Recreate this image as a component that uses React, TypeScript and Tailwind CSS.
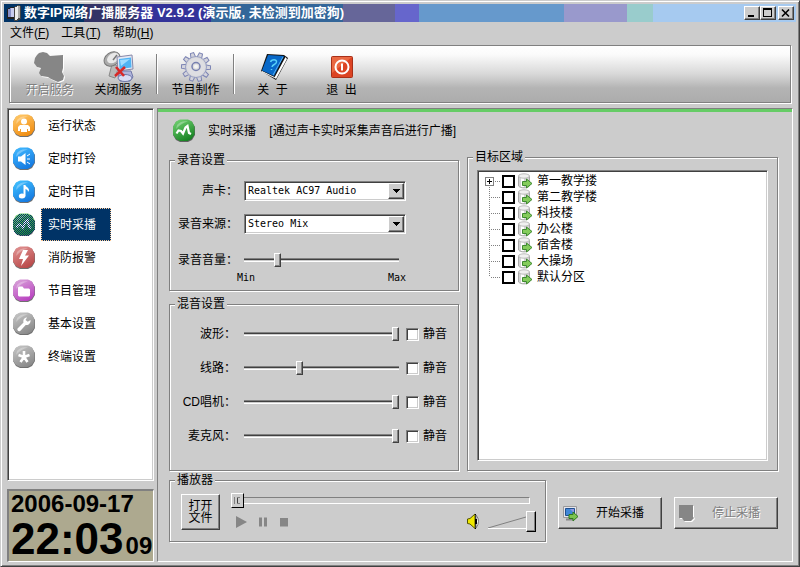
import type { ReactNode } from "react";
import { clsx } from "clsx";

const TITLE_BANDS = [
  { color: "#003366", size: 80 },
  { color: "#333366", size: 53 },
  { color: "#333399", size: 74 },
  { color: "#336699", size: 132 },
  { color: "#666699", size: 52 },
  { color: "#6666cc", size: 24 },
  { color: "#6699cc", size: 145 },
  { color: "#9999cc", size: 63 },
  { color: "#99cccc", size: 26 },
  { color: "#a6caf0", size: 143 },
];

const MENUS = [
  { label: "文件", key: "F" },
  { label: "工具", key: "T" },
  { label: "帮助", key: "H" },
];

const NAV = [
  { id: "status", label: "运行状态", light: "#ffc868", dark: "#f08c10" },
  { id: "bell", label: "定时打铃", light: "#40b8ff", dark: "#1478e0" },
  { id: "music", label: "定时节目", light: "#40c0ff", dark: "#1478e0" },
  { id: "live", label: "实时采播", light: "#7ad07a", dark: "#209030" },
  { id: "alarm", label: "消防报警", light: "#e09090", dark: "#b84848" },
  { id: "manage", label: "节目管理", light: "#d8a0d8", dark: "#b840c0" },
  { id: "basic", label: "基本设置", light: "#c4c4c4", dark: "#888888" },
  { id: "terminal", label: "终端设置", light: "#c4c4c4", dark: "#888888" },
];

const MIXERS = [
  { id: "wave", label: "波形：", value: 100 },
  { id: "line", label: "线路：", value: 35 },
  { id: "cd", label: "CD唱机：", value: 100 },
  { id: "mic", label: "麦克风：", value: 100 },
];

const ZONES = ["第一教学搂", "第二教学楼", "科技楼", "办公楼", "宿舍楼", "大操场", "默认分区"];

const RAISED =
  "border border-t-white border-l-white border-r-[#404040] border-b-[#404040] bg-[#ccc] shadow-[inset_-1px_-1px_0_#808080]";
const SUNKEN =
  "border border-t-[#808080] border-l-[#808080] border-r-white border-b-white shadow-[inset_1px_1px_0_#404040,inset_-1px_-1px_0_#ccc]";
const DISABLED_TEXT = "text-[#808080] [text-shadow:1px_1px_0_#fff]";

const SLIDER =
  "h-5 appearance-none bg-transparent [&::-webkit-slider-runnable-track]:h-1 [&::-webkit-slider-runnable-track]:bg-[linear-gradient(#808080_25%,#404040_25%_50%,#ccc_50%_75%,#fff_75%)] [&::-webkit-slider-thumb]:-mt-[5px] [&::-webkit-slider-thumb]:h-[14px] [&::-webkit-slider-thumb]:w-[7px] [&::-webkit-slider-thumb]:appearance-none [&::-webkit-slider-thumb]:border [&::-webkit-slider-thumb]:border-t-white [&::-webkit-slider-thumb]:border-l-white [&::-webkit-slider-thumb]:border-r-[#404040] [&::-webkit-slider-thumb]:border-b-[#404040] [&::-webkit-slider-thumb]:bg-[#ccc] [&::-webkit-slider-thumb]:shadow-[inset_-1px_-1px_0_#808080]";

const GLYPHS: Record<string, ReactNode> = {
  status: (
    <g fill="#fff">
      <circle cx="12" cy="7.5" r="3" />
      <path d="M6 17v-4l2-2h8l2 2v4h-2v-2h-1v3H9v-3H8v2z" />
    </g>
  ),
  bell: (
    <g fill="#fff">
      <path d="M6 9.500h3L13.500 6v12L9 14.500H6z" />
      <path d="M15 9l3-2M15 12h3M15 15l3 2" stroke="#fff" />
    </g>
  ),
  music: (
    <g fill="#fff">
      <ellipse cx="10" cy="16" rx="3.200" ry="2.500" />
      <path d="M11.500 5h2c0 2 3.500 2 3.500 5.500l-1 1.500c0-2-1-2.500-2.500-3v7.500h-2z" />
    </g>
  ),
  live: <path d="M4.500 14.500l2-3 2.500.5 2 2.500 2.500-6 2-1.500 1.500 7 2 1" fill="none" stroke="#fff" strokeWidth="2.200" />,
  alarm: <path d="M11 4h5l-3 5.500h4L9 20l2-7H7z" fill="#fff" />,
  manage: <path d="M6 8.500l1-1h3.500l1.500 2h5l1 1v6l-1 1H7l-1-1z" fill="#fff" />,
  basic: (
    <path
      d="M5.500 16.500l6-6c-.7-2.500.8-5 3.500-5l-1.500 2.500 2.300 1.800L18.500 8c.5 3-2 5.500-4.800 5l-5.500 6c-1.800.8-3.500-1-2.700-2.500z"
      fill="#fff"
    />
  ),
  terminal: <path d="M12 12V6M12 12l5.500-2M12 12l3.500 5M12 12l-3.500 5M12 12L6.500 10" stroke="#fff" strokeWidth="2.600" />,
};

type OrbProps = { id: string; glyph: string; light: string; dark: string; dithered?: boolean };

function Orb({ id, glyph, light, dark, dithered }: OrbProps) {
  return (
    <svg width="24" height="24" viewBox="0 0 24 24" className="shrink-0" aria-hidden="true">
      <defs>
        <linearGradient id={`orb-${id}`} x1="0.200" y1="0" x2="0.700" y2="1">
          <stop offset="0" stopColor={light} />
          <stop offset="1" stopColor={dark} />
        </linearGradient>
        <pattern id={`dither-${id}`} width="2" height="2" patternUnits="userSpaceOnUse">
          <rect width="1" height="1" fill="#003366" />
          <rect x="1" y="1" width="1" height="1" fill="#003366" />
        </pattern>
      </defs>
      <path d="M8 1h8l4 2 3 5v8l-3 5-4 2H8l-4-2-3-5V8l3-5z" fill="#333" opacity="0.700" />
      <path d="M8 .5h8l4 2 2.500 5v8l-3 4.500-4 2H8l-4-2L1 15.500v-8l3-5z" fill={`url(#orb-${id})`} />
      <path d="M5 6Q9 1 16 2.500 9 4 4 10z" fill="#fff" opacity="0.300" />
      {GLYPHS[glyph]}
      {dithered && (
        <path
          d="M8 1h8l4 2 3 5v8l-3 5-4 2H8l-4-2-3-5V8l3-5z"
          fill={`url(#dither-${id})`}
          shapeRendering="crispEdges"
        />
      )}
    </svg>
  );
}

function AppIcon() {
  return (
    <svg width="16" height="16" viewBox="0 0 16 16" shapeRendering="crispEdges" aria-hidden="true">
      <path d="M1 4l4-2h3v12H1z" fill="#222" />
      <path d="M2 4l3-1v9H2z" fill="#8890c8" />
      <path d="M5 3h3v9H5z" fill="#c8ccf0" />
      <path d="M8 2l4-2 3 1v13l-4 2H8z" fill="#444" />
      <path d="M9 2l3-1v13l-3 1z" fill="#eee" />
      <path d="M12 1h2v12h-2z" fill="#aaa" />
    </svg>
  );
}

function StartServiceIcon() {
  const shape = "M4 4l2-2 4-1 4 1 3 3 13-1v13l-1 4 2 4-1 4-5 2-7-3-3-2-7-1-2-3 2-5-4-1-3-4 1-5z";
  return (
    <svg width="33" height="32" viewBox="0 0 33 32" aria-hidden="true">
      <path d={shape} fill="#fff" transform="translate(1 1)" />
      <path d={shape} fill="#868686" />
    </svg>
  );
}

function StopServiceIcon() {
  return (
    <svg width="32" height="32" viewBox="0 0 32 32" aria-hidden="true">
      <path d="M9 13l-3 12 6 2 4-12z" fill="#b8b8b8" stroke="#888" />
      <ellipse cx="9" cy="8" rx="8.500" ry="6.500" transform="rotate(-35 9 8)" fill="#aaa" stroke="#777" />
      <ellipse cx="10" cy="7" rx="6.500" ry="4.500" transform="rotate(-35 10 7)" fill="#e8e8e8" />
      <path d="M10 9l4-5" stroke="#777" strokeWidth="1.500" />
      <path d="M14 6l15-2 1 14-15 2z" fill="#e4e8f4" stroke="#8888a8" />
      <path d="M16 8l12-1.500.5 10L16.500 18z" fill="#50b4f4" />
      <path d="M17 9l10-1-9 7z" fill="#a0dcff" />
      <path d="M18 20h10l2 6-3 4H17l-2-5z" fill="#b0b4dc" stroke="#7078a8" />
      <ellipse cx="22" cy="27" rx="7" ry="3.500" fill="#d8dcf4" stroke="#7078a8" />
      <path d="M13 16l8 9M22 16l-10 9" stroke="#d82828" strokeWidth="2.600" />
    </svg>
  );
}

function GearIcon() {
  const teeth = [20, 56, 92, 128, 164, 200, 236, 272, 308, 344];
  return (
    <svg width="32" height="32" viewBox="0 0 32 32" aria-hidden="true">
      {teeth.map((angle) => (
        <path
          key={angle}
          d="M13.500 7l.8-5.500h3.400l.8 5.500z"
          transform={`rotate(${angle} 16 16)`}
          fill="#d4d4dc"
          stroke="#7c84b4"
        />
      ))}
      <circle cx="16" cy="16" r="10.500" fill="#d8d8dc" stroke="#8c94bc" strokeWidth="0.800" />
      <circle cx="16" cy="16" r="9" fill="#dedee2" />
      <circle cx="16" cy="15.500" r="4" fill="#ddd" stroke="#7880b0" strokeWidth="1.500" />
      <circle cx="16" cy="15.500" r="2" fill="#f4f4f4" />
    </svg>
  );
}

function BookIcon() {
  return (
    <svg width="32" height="32" viewBox="0 0 32 32" aria-hidden="true">
      <path d="M10 3L27 4 31 7 19 29 4 20z" fill="#111" />
      <path d="M28.500 6L17.500 26.500 19 28 30 8z" fill="#fff" />
      <path d="M5 20l12.500 6 1 1.500L5 21z" fill="#fff" />
      <path d="M11 4l16 1-10 20-12-5.500z" fill="#0868c8" />
      <path d="M26 6L16 24" stroke="#58b0f0" />
      <path d="M13.500 11c1-3 6.500-3 6 0s-4 2-4.500 5M14.500 18v1" fill="none" stroke="#58d0f8" strokeWidth="1.500" />
    </svg>
  );
}

function PowerIcon() {
  return (
    <svg width="32" height="32" viewBox="0 0 32 32" aria-hidden="true">
      <rect x="5.500" y="5.500" width="21" height="21" rx="1" fill="#dc4424" stroke="#a83018" />
      <path d="M6 6h20L6 22z" fill="#f07850" opacity="0.700" />
      <circle cx="16" cy="16" r="6.500" fill="none" stroke="#fff" strokeWidth="2" />
      <path d="M16 12.500v7" stroke="#fff" strokeWidth="2" />
    </svg>
  );
}

function ZoneIcon() {
  return (
    <svg width="15" height="16" viewBox="0 0 15 16" className="shrink-0" aria-hidden="true">
      <path d="M.5 3v10c2 2.500 9 2.500 11 0V3z" fill="#d4d4d4" stroke="#aaa" />
      <path d="M3 4h3v10H3z" fill="#fff" />
      <ellipse cx="6" cy="3" rx="5.500" ry="2.200" fill="#f0f0f0" stroke="#bbb" />
      <path d="M4.500 8.500h4V6l5.500 4.500L8.500 15v-2.500h-4z" fill="#84cc5c" stroke="#3f8a30" />
    </svg>
  );
}

function StartCaptureIcon() {
  return (
    <svg width="16" height="17" viewBox="0 0 16 17" aria-hidden="true">
      <path d="M.5 1.500h13v11H.5z" fill="#e4e4ec" stroke="#999" />
      <path d="M2.500 3.500h9v7h-9z" fill="#4088d8" stroke="#205090" />
      <path d="M7 4h4v4z" fill="#9098e0" />
      <path d="M3 14.500h7" stroke="#888" strokeWidth="2" />
      <path d="M6 9.500h4V7l5 4.500-5 4.500v-2.500H6z" fill="#7cc450" stroke="#2f7a20" />
    </svg>
  );
}

function StopCaptureIcon() {
  return (
    <svg width="16" height="17" viewBox="0 0 16 17" aria-hidden="true">
      <path d="M1 1h14v11l1 2-3 3H6l-2-3H1z" fill="#fff" />
      <path d="M0 0h14v12l1 1-3 3H5l-2-3H0z" fill="#868686" />
    </svg>
  );
}

type GroupProps = { title: string; className?: string; bodyClassName?: string; children: ReactNode };

function Group({ title, className, bodyClassName, children }: GroupProps) {
  return (
    <fieldset
      className={clsx(
        "min-w-0 border border-[#808080] shadow-[1px_1px_0_#fff,inset_1px_1px_0_#fff]",
        className,
      )}
    >
      <legend className="ml-[5px] h-4 bg-[#ccc] px-0.5 leading-4">{title}</legend>
      <div className={bodyClassName}>{children}</div>
    </fieldset>
  );
}

type ToolButtonProps = { icon: ReactNode; label: string; disabled?: boolean };

function ToolButton({ icon, label, disabled }: ToolButtonProps) {
  return (
    <button type="button" disabled={disabled} className="flex w-[69px] flex-col items-center pt-[5px]">
      {icon}
      <span className={clsx("whitespace-pre leading-[14px]", disabled && DISABLED_TEXT)}>{label}</span>
    </button>
  );
}

function ToolSeparator() {
  return (
    <div className="flex w-2 justify-center py-2">
      <div className="w-0.5 border-l border-[#808080] bg-white" />
    </div>
  );
}

type SelectRowProps = { id: string; label: string; option: string };

function SelectRow({ id, label, option }: SelectRowProps) {
  return (
    <div className="flex h-5 items-center gap-1.5">
      <label htmlFor={id} className="w-[60px] text-right">
        {label}
      </label>
      <div className="relative h-5 w-[162px]">
        <select
          id={id}
          className={clsx(SUNKEN, "h-full w-full appearance-none bg-white pl-[3px] font-['DejaVu_Sans_Mono',monospace] text-[10px]")}
        >
          <option>{option}</option>
        </select>
        <span className={clsx(RAISED, "pointer-events-none absolute top-0.5 right-0.5 flex h-4 w-4 items-center justify-center")}>
          <svg width="7" height="4" viewBox="0 0 7 4" shapeRendering="crispEdges" aria-hidden="true">
            <path d="M0 0h7L3.500 4z" />
          </svg>
        </span>
      </div>
    </div>
  );
}

function TitleBar() {
  return (
    <header className="relative flex h-[18px] items-center justify-between">
      <div className="absolute inset-0 flex">
        {TITLE_BANDS.map(({ color, size }) => (
          <div key={color} style={{ backgroundColor: color, flexGrow: size }} />
        ))}
      </div>
      <div className="relative flex items-center gap-0.5 pl-0.5">
        <AppIcon />
        <h1 className="text-[13px] leading-[18px] font-bold whitespace-nowrap text-white">
          数字IP网络广播服务器 V2.9.2 (演示版, 未检测到加密狗)
        </h1>
      </div>
      <div className="relative flex pr-0.5">
        <button type="button" aria-label="最小化" className={clsx(RAISED, "h-[14px] w-4")}>
          <svg width="12" height="12" viewBox="0 0 12 12" shapeRendering="crispEdges">
            <path d="M3 8h6v2H3z" />
          </svg>
        </button>
        <button type="button" aria-label="最大化" className={clsx(RAISED, "h-[14px] w-4")}>
          <svg width="12" height="12" viewBox="0 0 12 12" shapeRendering="crispEdges">
            <path d="M2 1h9v9H2zM3 3v6h7V3z" fillRule="evenodd" />
          </svg>
        </button>
        <button type="button" aria-label="关闭" className={clsx(RAISED, "ml-0.5 h-[14px] w-4")}>
          <svg width="12" height="12" viewBox="0 0 12 12">
            <path d="M3 2.500l7 7M10 2.500l-7 7" stroke="#000" strokeWidth="1.600" />
          </svg>
        </button>
      </div>
    </header>
  );
}

function Sidebar() {
  return (
    <aside className="flex w-[147px] shrink-0 flex-col gap-2">
      <nav className={clsx(SUNKEN, "flex-1 bg-white px-1")}>
        {NAV.map(({ id, label, light, dark }) => {
          const active = id === "live";
          return (
            <a key={id} href={`#${id}`} className="flex h-[33px] items-center gap-[5px]">
              <Orb id={id} glyph={id} light={light} dark={dark} dithered={active} />
              <span
                className={clsx(
                  "flex h-full w-[70px] items-center pl-[7px]",
                  active && "bg-[#003366] text-white outline-1 -outline-offset-1 outline-dotted outline-[#ffcc99]",
                )}
              >
                {label}
              </span>
            </a>
          );
        })}
      </nav>
      <div className="border-t-2 border-l-2 border-r border-b border-t-[#808080] border-l-[#808080] border-r-white border-b-white bg-[#ada98f] pl-0.5 font-['Liberation_Sans',sans-serif] font-bold text-black">
        <div className="text-2xl leading-[25px]">2006-09-17</div>
        <div className="flex items-baseline gap-0.5 leading-[45px]">
          <span className="text-[44px]">22:03</span>
          <span className="text-2xl leading-6">09</span>
        </div>
      </div>
    </aside>
  );
}

function RecordGroup() {
  return (
    <Group title="录音设置" bodyClassName="px-2 pt-[13px] pb-1">
      <div className="flex flex-col gap-[13px]">
        <SelectRow id="card" label="声卡：" option="Realtek AC97 Audio" />
        <SelectRow id="source" label="录音来源：" option="Stereo Mix" />
      </div>
      <div className="mt-4 flex items-center gap-1.5">
        <label htmlFor="record-volume" className="w-[60px] text-right">
          录音音量：
        </label>
        <input id="record-volume" type="range" defaultValue={20} className={clsx(SLIDER, "w-[155px]")} />
      </div>
      <div className="ml-[59px] flex h-4 w-[169px] items-center justify-between font-['DejaVu_Sans_Mono',monospace] text-[10px]">
        <span>Min</span>
        <span>Max</span>
      </div>
    </Group>
  );
}

function MixGroup() {
  return (
    <Group title="混音设置" className="flex-1" bodyClassName="px-2 pt-[5px]">
      {MIXERS.map(({ id, label, value }) => (
        <div key={id} className="flex h-[34px] items-center">
          <label htmlFor={id} className="mr-2 w-[58px] text-right whitespace-nowrap">
            {label}
          </label>
          <input id={id} type="range" defaultValue={value} className={clsx(SLIDER, "mr-[7px] w-[155px]")} />
          <label className="flex items-center gap-1">
            <input type="checkbox" className={clsx(SUNKEN, "h-[13px] w-[13px] appearance-none bg-white checked:bg-[#404040]")} />
            静音
          </label>
        </div>
      ))}
    </Group>
  );
}

function ZoneGroup() {
  return (
    <Group title="目标区域" className="flex flex-1 flex-col" bodyClassName="flex flex-1 flex-col px-[9px] pt-[5px] pb-[9px]">
      <ul className={clsx(SUNKEN, "flex-1 bg-white pt-0.5 pl-[7px]")}>
        {ZONES.map((zone, i) => (
          <li key={zone} className="flex h-4 items-center">
            <svg width="17" height="16" viewBox="0 0 17 16" shapeRendering="crispEdges" aria-hidden="true">
              <path
                d={i === ZONES.length - 1 ? "M4.500 0v8" : i === 0 ? "M4.500 12v4" : "M4.500 0v16"}
                stroke="#808080"
                strokeDasharray="1 1"
              />
              <path d="M6 8.500h9" stroke="#808080" strokeDasharray="1 1" />
              {i === 0 && (
                <>
                  <rect x="0.500" y="4.500" width="8" height="8" fill="#fff" stroke="#808080" />
                  <path d="M2 8.500h5M4.500 6v5" stroke="#000" />
                </>
              )}
            </svg>
            <label className="flex items-center leading-4">
              <input
                type="checkbox"
                className="mr-[3px] h-[13px] w-[13px] appearance-none border-2 border-black bg-white checked:bg-black"
              />
              <ZoneIcon />
              <span className="pl-1">{zone}</span>
            </label>
          </li>
        ))}
      </ul>
    </Group>
  );
}

function PlayerGroup() {
  return (
    <Group title="播放器" className="flex-1" bodyClassName="pt-1 pr-[9px] pb-[9px] pl-[11px]">
      <div className="flex items-start gap-[11px]">
        <button type="button" className={clsx(RAISED, "mt-0.5 h-9 w-[39px] leading-3")}>
          打开
          <br />
          文件
        </button>
        <div className="flex min-w-0 flex-1 flex-col gap-[3px]">
          <input
            type="range"
            aria-label="播放进度"
            disabled
            defaultValue={0}
            className="mr-1.5 h-4 appearance-none bg-transparent [&::-webkit-slider-runnable-track]:h-[7px] [&::-webkit-slider-runnable-track]:border [&::-webkit-slider-runnable-track]:border-t-[#808080] [&::-webkit-slider-runnable-track]:border-l-[#808080] [&::-webkit-slider-runnable-track]:border-r-white [&::-webkit-slider-runnable-track]:border-b-white [&::-webkit-slider-thumb]:-mt-[5px] [&::-webkit-slider-thumb]:-ml-px [&::-webkit-slider-thumb]:h-[15px] [&::-webkit-slider-thumb]:w-[13px] [&::-webkit-slider-thumb]:appearance-none [&::-webkit-slider-thumb]:border [&::-webkit-slider-thumb]:border-t-white [&::-webkit-slider-thumb]:border-l-white [&::-webkit-slider-thumb]:border-r-black [&::-webkit-slider-thumb]:border-b-black [&::-webkit-slider-thumb]:bg-[#ccc] [&::-webkit-slider-thumb]:bg-[linear-gradient(#808080,#808080),linear-gradient(#404040,#404040),linear-gradient(#808080,#808080),linear-gradient(#808080,#808080)] [&::-webkit-slider-thumb]:bg-[size:1px_7px,1px_5px,3px_1px,3px_1px] [&::-webkit-slider-thumb]:bg-[position:2px_3px,5px_4px,5px_3px,5px_9px] [&::-webkit-slider-thumb]:bg-no-repeat"
          />
          <div className="flex h-[21px] items-center">
            <div className="flex flex-1 gap-2.5 pl-1">
              <button type="button" disabled aria-label="播放">
                <svg width="13" height="12" viewBox="0 0 13 12">
                  <path d="M1 0v12l11-6z" fill="#868686" />
                </svg>
              </button>
              <button type="button" disabled aria-label="暂停">
                <svg width="11" height="12" viewBox="0 0 11 12">
                  <path d="M1 1.500h3v9H1zM6 1.500h3v9H6z" fill="#868686" />
                </svg>
              </button>
              <button type="button" disabled aria-label="停止">
                <svg width="11" height="12" viewBox="0 0 11 12">
                  <path d="M1 2h8v8.500H1z" fill="#868686" />
                </svg>
              </button>
            </div>
            <svg width="13" height="17" viewBox="0 0 13 17" aria-hidden="true">
              <path d="M.5 6L3 5.500 8 1v14.500L3 11l-2.500-.5z" fill="#f0e800" stroke="#555500" />
              <path d="M8.500 1v15" stroke="#000" />
              <path d="M9 2q5 6 0 13z" fill="#fff" stroke="#777" />
              <path d="M9 6v5" stroke="#000" strokeWidth="2" />
            </svg>
            <div className="relative ml-2 h-[21px] w-12">
              <svg className="absolute inset-0" width="48" height="21" viewBox="0 0 48 21" aria-hidden="true">
                <path d="M0 17L38 6" stroke="#808080" />
                <path d="M0 17.500h38" stroke="#fff" />
              </svg>
              <input
                type="range"
                aria-label="音量"
                defaultValue={100}
                className="absolute inset-0 h-[21px] w-12 appearance-none bg-transparent [&::-webkit-slider-thumb]:h-[21px] [&::-webkit-slider-thumb]:w-2.5 [&::-webkit-slider-thumb]:appearance-none [&::-webkit-slider-thumb]:border [&::-webkit-slider-thumb]:border-t-white [&::-webkit-slider-thumb]:border-l-white [&::-webkit-slider-thumb]:border-r-black [&::-webkit-slider-thumb]:border-b-black [&::-webkit-slider-thumb]:bg-[#ccc] [&::-webkit-slider-thumb]:shadow-[inset_-1px_-1px_0_#808080]"
              />
            </div>
          </div>
        </div>
      </div>
    </Group>
  );
}

export default function App() {
  return (
    <div className="flex min-h-screen flex-col border border-t-[#ccc] border-l-[#ccc] border-r-[#404040] border-b-[#404040] bg-[#ccc] px-[3px] pt-[3px] pb-1 font-['Liberation_Sans','Noto_Sans_CJK_SC',sans-serif] text-xs text-black shadow-[inset_1px_1px_0_#fff,inset_-1px_-1px_0_#808080]">
      <TitleBar />
      <div className="flex h-[21px] items-center gap-3 pl-1.5" role="menubar">
        {MENUS.map(({ label, key }) => (
          <button key={key} type="button" role="menuitem" className="leading-5">
            {label}(<u>{key}</u>)
          </button>
        ))}
      </div>

      <div
        role="toolbar"
        className="mx-[5px] mt-0.5 flex h-[58px] border border-[#808080] bg-[linear-gradient(#fff_0%,#fbfbfb_15%,#d8d8d8_50%,#b4b4b4_75%,#acacac_100%)] pl-[5px] shadow-[1px_1px_0_#fff,inset_1px_1px_0_#fff]"
      >
        <ToolButton icon={<StartServiceIcon />} label="开启服务" disabled />
        <ToolButton icon={<StopServiceIcon />} label="关闭服务" />
        <ToolSeparator />
        <ToolButton icon={<GearIcon />} label="节目制作" />
        <ToolSeparator />
        <ToolButton icon={<BookIcon />} label="关  于" />
        <ToolButton icon={<PowerIcon />} label="退  出" />
      </div>

      <div className="mt-[5px] flex flex-1 gap-[3px] px-[3px]">
        <Sidebar />
        <main className="flex min-w-0 flex-1 flex-col border border-t-[#808080] border-l-[#808080] border-r-white border-b-white">
          <div className="h-[3px] bg-[#66cc66]" />
          <div className="flex flex-1 flex-col pr-[14px] pb-[19px] pl-[11px]">
            <div className="flex h-[37px] items-center gap-3 pl-[3px]">
              <Orb id="heading" glyph="live" light="#70d070" dark="#148020" />
              <h2 className="whitespace-pre">实时采播    [通过声卡实时采集声音后进行广播]</h2>
            </div>
            <div className="flex flex-1 gap-2">
              <div className="flex w-[290px] shrink-0 flex-col gap-[5px] pt-[3px]">
                <RecordGroup />
                <MixGroup />
              </div>
              <ZoneGroup />
            </div>
            <div className="flex items-start gap-3 pt-px">
              <PlayerGroup />
              <div className="flex gap-3 pt-[25px]">
                <button type="button" className={clsx(RAISED, "flex h-8 w-[104px] items-center pl-1")}>
                  <StartCaptureIcon />
                  <span className="flex-1 text-center">开始采播</span>
                </button>
                <button type="button" disabled className={clsx(RAISED, "flex h-8 w-[104px] items-center pl-1")}>
                  <StopCaptureIcon />
                  <span className={clsx("flex-1 text-center", DISABLED_TEXT)}>停止采播</span>
                </button>
              </div>
            </div>
          </div>
        </main>
      </div>
    </div>
  );
}
